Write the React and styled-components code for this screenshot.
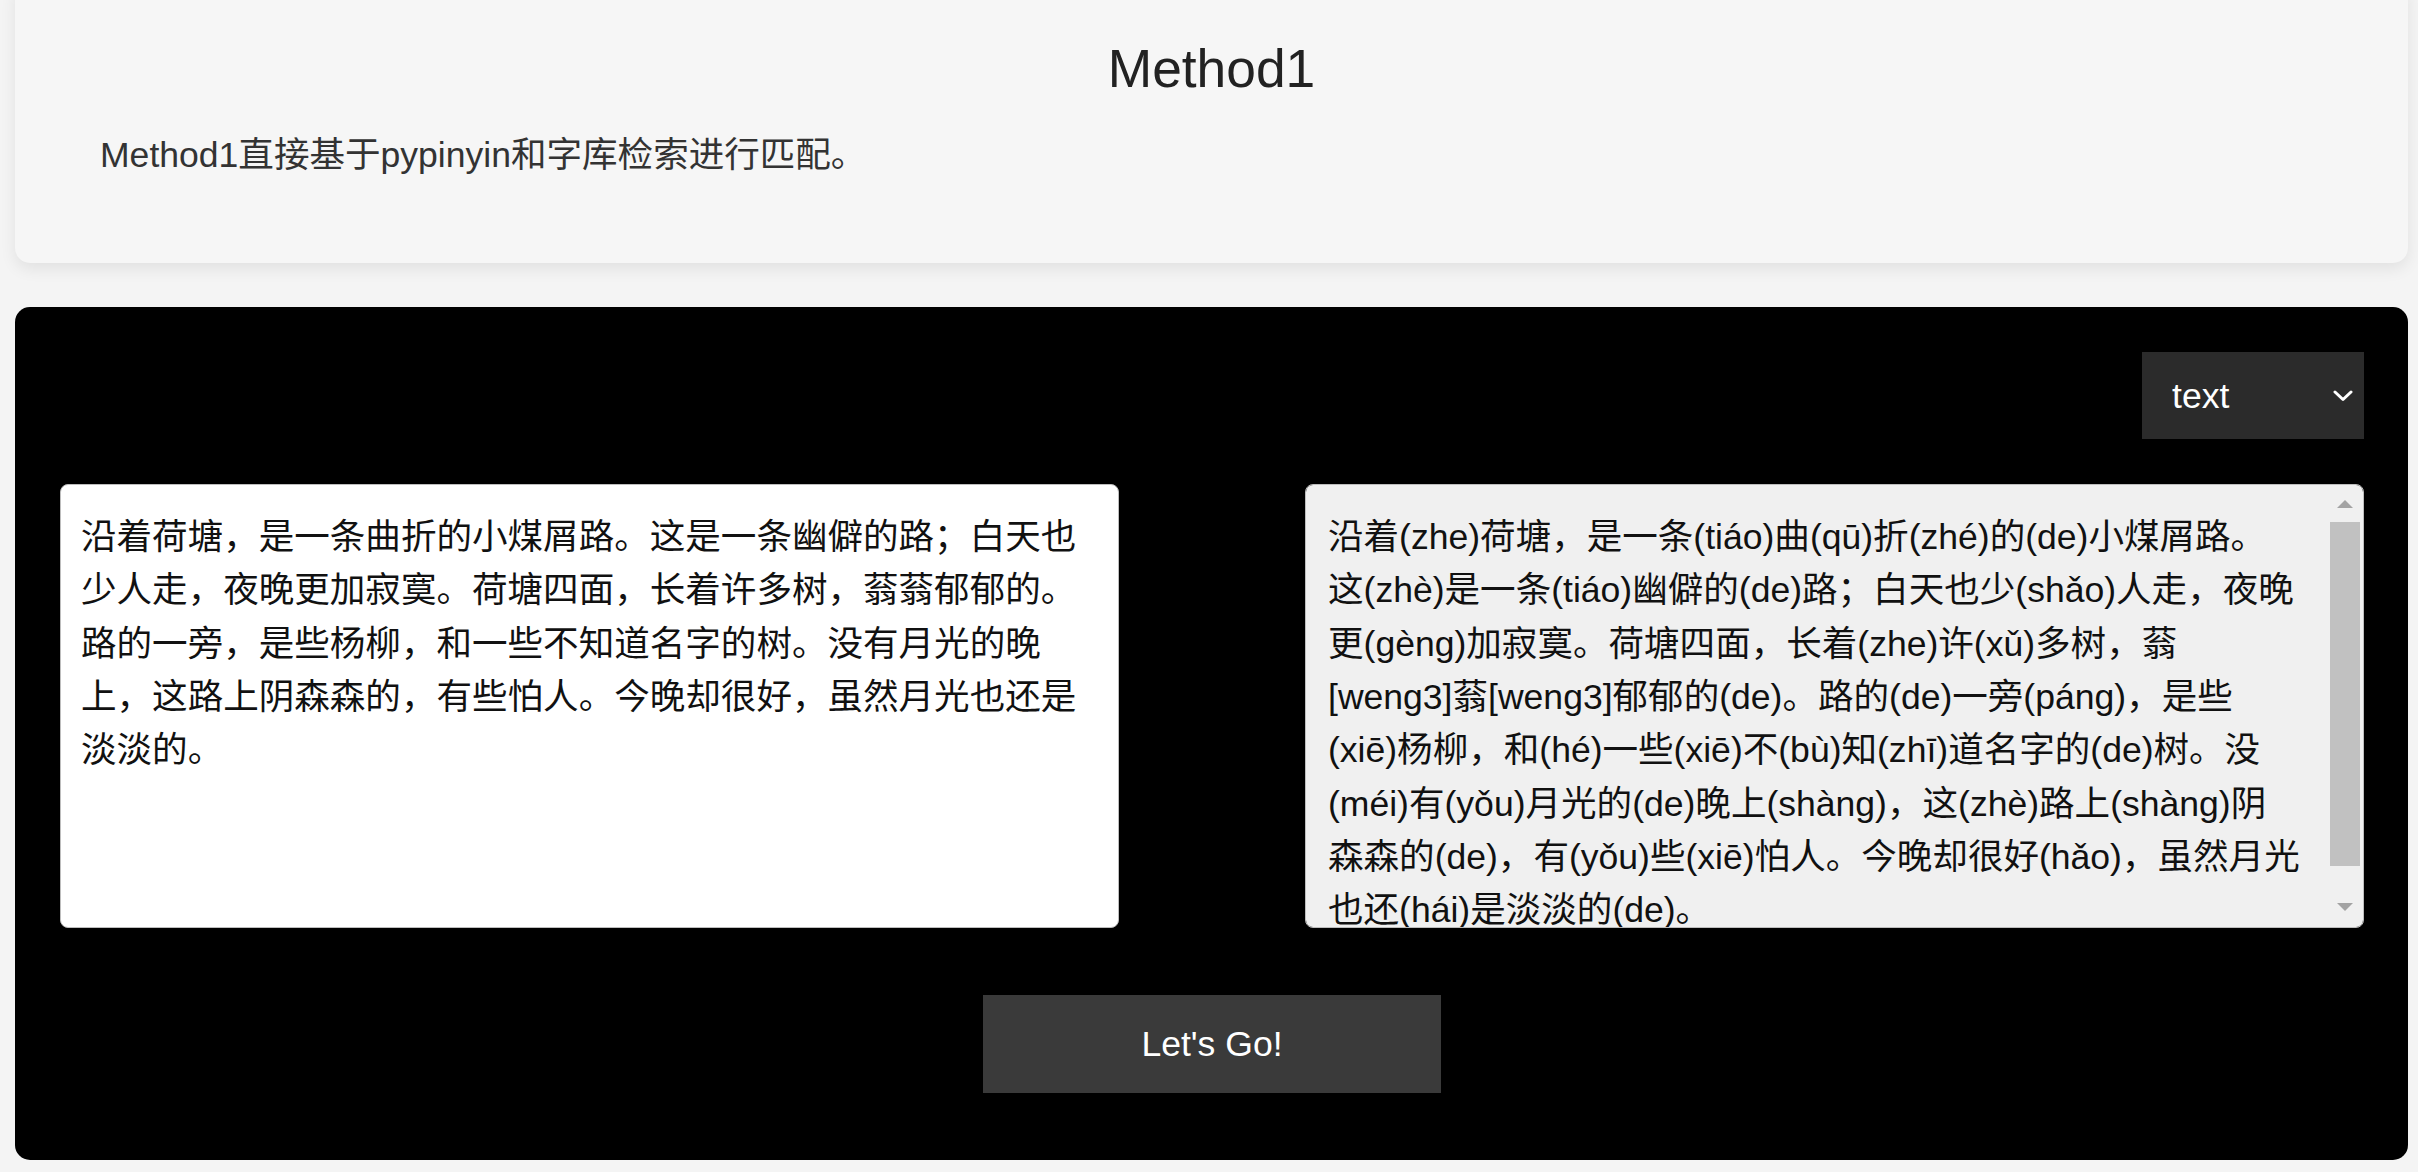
import React from "react";
import styled, { createGlobalStyle } from "styled-components";

const GlobalStyle = createGlobalStyle`
  html, body {
    margin: 0;
    padding: 0;
    background: #f4f4f4;
    font-family: "Liberation Sans", "Noto Sans CJK SC", Arial, sans-serif;
    overflow: hidden;
  }
`;

const Page = styled.div`
  padding: 0 10px 12px 15px;
`;

const HeaderCard = styled.section`
  margin-top: -20px;
  background: #f6f6f6;
  border-radius: 15px;
  box-shadow: 0 6px 16px rgba(0, 0, 0, 0.08);
  padding: 57px 85px 84px;
`;

const Title = styled.h1`
  margin: 0;
  text-align: center;
  font-size: 53.33px;
  line-height: 64px;
  font-weight: 400;
  color: #222;
`;

const Description = styled.p`
  margin: 30px 0 0;
  font-size: 35.56px;
  line-height: 48px;
  color: #333;
`;

const Panel = styled.section`
  margin-top: 44px;
  background: #000;
  border-radius: 15px;
  padding: 45px 44px 67px 45px;
`;

const Toolbar = styled.div`
  display: flex;
  justify-content: flex-end;
`;

const SelectWrap = styled.div`
  position: relative;
  width: 222px;
  height: 87px;
`;

const ModeSelect = styled.select`
  appearance: none;
  -webkit-appearance: none;
  width: 100%;
  height: 100%;
  border: none;
  border-radius: 0;
  background: #2b2b2b;
  color: #fff;
  font-family: "Liberation Sans", Arial, sans-serif;
  font-size: 35.56px;
  padding: 0 0 0 30px;
  outline: none;
`;

const Chevron = styled.svg`
  position: absolute;
  right: 11px;
  top: 50%;
  transform: translateY(-50%);
  pointer-events: none;
`;

const Editors = styled.div`
  margin-top: 45px;
  display: grid;
  grid-template-columns: 1fr 1fr;
  column-gap: 186px;
`;

const EditorBox = styled.div`
  position: relative;
  height: 444px;
`;

const TextBox = styled.textarea`
  display: block;
  box-sizing: border-box;
  height: 100%;
  width: 100%;
  margin: 0;
  border: 1px solid #bdbdbd;
  border-radius: 8px;
  padding: ${(p) => (p.$output ? "26px 63px 22px 22px" : "26px 32px 22px 20px")};
  background: ${(p) => (p.$output ? "#f0f0f0" : "#ffffff")};
  color: #111;
  font-family: "Liberation Sans", "Noto Sans CJK SC", sans-serif;
  font-size: 35.56px;
  line-height: 53.33px;
  resize: none;
  outline: none;
  overflow-y: auto;
  scrollbar-width: none;
  &::-webkit-scrollbar {
    display: none;
  }
`;

const ScrollBar = styled.div`
  position: absolute;
  top: 1px;
  bottom: 1px;
  right: 1px;
  width: 34px;
  display: flex;
  flex-direction: column;
  border-radius: 0 7px 7px 0;
  pointer-events: none;
`;

const ScrollButton = styled.div`
  height: 37px;
  flex: none;
  display: flex;
  justify-content: center;
  align-items: ${(p) => (p.$down ? "flex-start" : "flex-end")};
  padding: ${(p) => (p.$down ? "13px 2px 0 0" : "0 2px 14px 0")};
  box-sizing: border-box;
`;

const ScrollTrack = styled.div`
  flex: 1;
  padding: 0 3px 0 1px;
`;

const ScrollThumb = styled.div`
  height: 344px;
  background: #c1c1c1;
`;

const ActionRow = styled.div`
  margin-top: 67px;
  display: flex;
  justify-content: center;
`;

const GoButton = styled.button`
  width: 458px;
  height: 98px;
  border: none;
  border-radius: 0;
  background: #3a3a3a;
  color: #fff;
  font-family: "Liberation Sans", Arial, sans-serif;
  font-size: 35.56px;
  cursor: pointer;
`;

const SOURCE =
  "沿着荷塘，是一条曲折的小煤屑路。这是一条幽僻的路；白天也少人走，夜晚更加寂寞。荷塘四面，长着许多树，蓊蓊郁郁的。路的一旁，是些杨柳，和一些不知道名字的树。没有月光的晚上，这路上阴森森的，有些怕人。今晚却很好，虽然月光也还是淡淡的。";

const RESULT =
  "沿着(zhe)荷塘，是一条(tiáo)曲(qū)折(zhé)的(de)小煤屑路。这(zhè)是一条(tiáo)幽僻的(de)路；白天也少(shǎo)人走，夜晚更(gèng)加寂寞。荷塘四面，长着(zhe)许(xǔ)多树，蓊[weng3]蓊[weng3]郁郁的(de)。路的(de)一旁(páng)，是些(xiē)杨柳，和(hé)一些(xiē)不(bù)知(zhī)道名字的(de)树。没(méi)有(yǒu)月光的(de)晚上(shàng)，这(zhè)路上(shàng)阴森森的(de)，有(yǒu)些(xiē)怕人。今晚却很好(hǎo)，虽然月光也还(hái)是淡淡的(de)。";

function Arrow({ down }) {
  return (
    <svg width="16" height="8" viewBox="0 0 16 8">
      <polygon points={down ? "0,0 16,0 8,8" : "0,8 16,8 8,0"} fill="#a3a3a3" />
    </svg>
  );
}

export default function App() {
  return (
    <>
      <GlobalStyle />
      <Page>
        <HeaderCard>
          <Title>Method1</Title>
          <Description>Method1直接基于pypinyin和字库检索进行匹配。</Description>
        </HeaderCard>
        <Panel>
          <Toolbar>
            <SelectWrap>
              <ModeSelect defaultValue="text">
                <option value="text">text</option>
                <option value="file">file</option>
              </ModeSelect>
              <Chevron width="20" height="12" viewBox="0 0 20 12">
                <path d="M2 2 L10 9.5 L18 2" fill="none" stroke="#fff" strokeWidth="3" strokeLinecap="round" strokeLinejoin="round" />
              </Chevron>
            </SelectWrap>
          </Toolbar>
          <Editors>
            <EditorBox>
              <TextBox defaultValue={SOURCE} />
            </EditorBox>
            <EditorBox>
              <TextBox $output readOnly value={RESULT} />
              <ScrollBar>
                <ScrollButton>
                  <Arrow />
                </ScrollButton>
                <ScrollTrack>
                  <ScrollThumb />
                </ScrollTrack>
                <ScrollButton $down>
                  <Arrow down />
                </ScrollButton>
              </ScrollBar>
            </EditorBox>
          </Editors>
          <ActionRow>
            <GoButton>Let's Go!</GoButton>
          </ActionRow>
        </Panel>
      </Page>
    </>
  );
}
